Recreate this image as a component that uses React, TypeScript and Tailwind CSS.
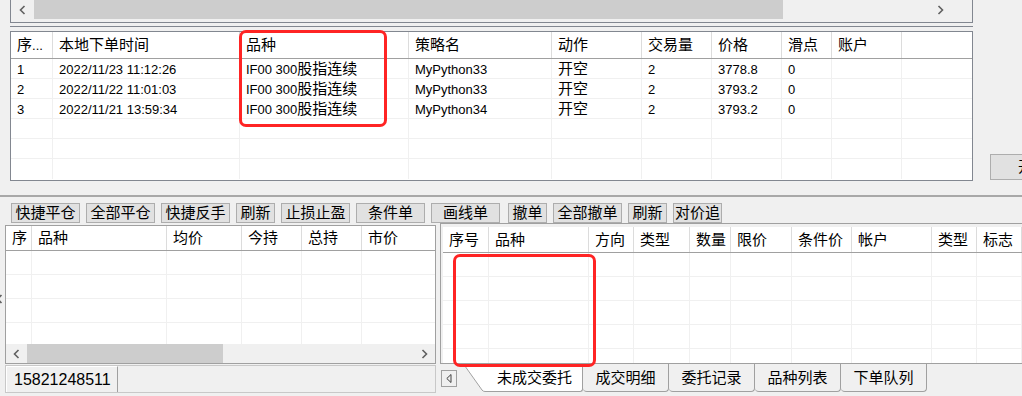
import React from 'react';

const cjk = /[\u2e80-\u9fff\uff00-\uffef]/;

// mixed text: CJK glyphs render larger than the latin ones, as on the Windows UI
const Txt: React.FC<{ s: string }> = ({ s }) => {
  const runs: { t: string; c: boolean }[] = [];
  for (const ch of s) {
    const c = cjk.test(ch);
    const last = runs[runs.length - 1];
    if (last && last.c === c) last.t += ch;
    else runs.push({ t: ch, c });
  }
  return (
    <span className="whitespace-nowrap leading-none">
      {runs.map((r, i) => (
        <span key={i} className={r.c ? 'text-[15px]' : 'text-[13px]'}>
          {r.t}
        </span>
      ))}
    </span>
  );
};

const Chevron: React.FC<{ dir: 'left' | 'right' }> = ({ dir }) => (
  <svg width="7" height="10" viewBox="0 0 7 10">
    <path
      d={dir === 'left' ? 'M5.5 1 L1.5 5 L5.5 9' : 'M1.5 1 L5.5 5 L1.5 9'}
      fill="none"
      stroke="#606060"
      strokeWidth="1.6"
    />
  </svg>
);

const topCols = ['w-[42px]', 'w-[187px]', 'w-[169px]', 'w-[143px]', 'w-[90px]', 'w-[70px]', 'w-[70px]', 'w-[50px]', 'w-[70px]'];
const topHead = ['序...', '本地下单时间', '品种', '策略名', '动作', '交易量', '价格', '滑点', '账户'];
const topRows = [
  ['1', '2022/11/23 11:12:26', 'IF00 300股指连续', 'MyPython33', '开空', '2', '3778.8', '0', ''],
  ['2', '2022/11/22 11:01:03', 'IF00 300股指连续', 'MyPython33', '开空', '2', '3793.2', '0', ''],
  ['3', '2022/11/21 13:59:34', 'IF00 300股指连续', 'MyPython34', '开空', '2', '3793.2', '0', ''],
  ['', '', '', '', '', '', '', '', ''],
  ['', '', '', '', '', '', '', '', ''],
  ['', '', '', '', '', '', '', '', ''],
];

const posCols = ['w-[26px]', 'w-[135px]', 'w-[75px]', 'w-[60px]', 'w-[60px]'];
const posHead = ['序', '品种', '均价', '今持', '总持', '市价'];

const ordCols = ['w-[46px]', 'w-[100px]', 'w-[45px]', 'w-[56px]', 'w-[41px]', 'w-[61px]', 'w-[60px]', 'w-[80px]', 'w-[45px]', 'w-[45px]'];
const ordHead = ['序号', '品种', '方向', '类型', '数量', '限价', '条件价', '帐户', '类型', '标志'];

const toolButtons = [
  { label: '快捷平仓', w: 'w-[69px]' },
  { label: '全部平仓', w: 'w-[69px]' },
  { label: '快捷反手', w: 'w-[69px]' },
  { label: '刷新', w: 'w-[39px]' },
  { label: '止损止盈', w: 'w-[69px]' },
  { label: '条件单', w: 'w-[69px]' },
  { label: '画线单', w: 'w-[69px]' },
  { label: '撤单', w: 'w-[39px] ml-[2px]' },
  { label: '全部撤单', w: 'w-[69px]' },
  { label: '刷新', w: 'w-[39px]' },
  { label: '对价追', w: 'w-[49px]' },
];

const tabs = ['成交明细', '委托记录', '品种列表', '下单队列'];

export default function App() {
  return (
    <div className="relative w-[1022px] h-[396px] overflow-hidden bg-[#f0f0f0] text-black font-['Liberation_Sans','Noto_Sans_CJK_SC',sans-serif] flex flex-col">
      {/* upper area: signal log */}
      <div className="h-[195px] flex shrink-0">
        <div className="w-[10px] shrink-0" />
        <div className="w-[963px] shrink-0 flex flex-col">
          <div className="h-[23px] border-x border-b border-[#828790] bg-[#f0f0f0] flex flex-col">
            <div className="h-[19px] flex">
              <div className="w-[23px] flex items-center justify-center">
                <Chevron dir="left" />
              </div>
              <div className="w-[749px] bg-[#cdcdcd]" />
              <div className="flex-1" />
              <div className="w-[21px] flex items-center justify-center">
                <Chevron dir="right" />
              </div>
              <div className="w-[21px]" />
            </div>
          </div>
          <div className="h-[3px]" />
          <div className="h-[1px] bg-[#828790]" />
          <div className="h-[4px]" />
          <div className="h-[150px] border border-[#828790] bg-white flex flex-col">
            <div className="h-[27px] flex border-b border-[#a0a0a0] shrink-0">
              {topHead.map((h, i) => (
                <div key={i} className={`${topCols[i]} shrink-0 border-r border-[#dcdcdc] pl-[6px] flex items-center`}>
                  <Txt s={h} />
                </div>
              ))}
              <div className="flex-1" />
            </div>
            {topRows.map((r, ri) => (
              <div key={ri} className="h-[20px] flex border-b border-[#f0f0f0] last:border-b-0 shrink-0">
                {r.map((c, ci) => (
                  <div key={ci} className={`${topCols[ci]} shrink-0 border-r border-[#f0f0f0] pl-[6px] flex items-center`}>
                    <Txt s={c} />
                  </div>
                ))}
                <div className="flex-1" />
              </div>
            ))}
          </div>
        </div>
        <div className="flex-1 min-w-0">
          <div className="ml-[17px] mt-[154px] w-[86px] h-[26px] border border-[#adadad] bg-[#e1e1e1] flex items-center pl-[27px]">
            <Txt s="开仓" />
          </div>
        </div>
      </div>

      <div className="h-[2px] bg-[#a8a8a8] shrink-0" />

      {/* toolbar */}
      <div className="pt-[6px] pl-[11px] flex gap-[6px] shrink-0">
        {toolButtons.map((b, i) => (
          <div key={i} className={`${b.w} h-[20px] shrink-0 border border-[#adadad] bg-[#e1e1e1] flex items-center justify-center`}>
            <Txt s={b.label} />
          </div>
        ))}
      </div>

      {/* lower area */}
      <div className="flex flex-1">
        <div className="w-[5px] shrink-0 pt-[71px] overflow-hidden">
          <div className="-ml-[4px]">
            <Chevron dir="left" />
          </div>
        </div>

        {/* positions */}
        <div className="w-[431px] shrink-0 flex flex-col">
          <div className="mt-[2px] h-[139px] border border-[#a0a0a0] bg-white flex flex-col">
            <div className="h-[25px] flex border-b border-[#a0a0a0] shrink-0">
              {posHead.map((h, i) => (
                <div key={i} className={`${posCols[i] ?? 'flex-1'} shrink-0 ${i < 5 ? 'border-r border-[#dcdcdc]' : ''} pl-[6px] flex items-center`}>
                  <Txt s={h} />
                </div>
              ))}
            </div>
            <div className="flex-1 overflow-hidden">
              {[0, 1, 2, 3].map((ri) => (
                <div key={ri} className="h-[24px] flex border-b border-[#f0f0f0]">
                  {posCols.map((w, ci) => (
                    <div key={ci} className={`${w} shrink-0 border-r border-[#f0f0f0]`} />
                  ))}
                  <div className="flex-1" />
                </div>
              ))}
            </div>
            <div className="h-[19px] flex bg-[#f0f0f0] shrink-0">
              <div className="w-[21px] flex items-center justify-center">
                <Chevron dir="left" />
              </div>
              <div className="w-[196px] bg-[#cdcdcd]" />
              <div className="flex-1" />
              <div className="w-[21px] flex items-center justify-center">
                <Chevron dir="right" />
              </div>
            </div>
          </div>
          <div className="mt-[1px] h-[28px] border border-[#c8c8c8] flex">
            <div className="w-[112px] border-r border-[#a0a0a0] border-l border-t border-l-white border-t-white flex items-center pl-[7px]">
              <span className="text-[16px] leading-none">15821248511</span>
            </div>
            <div className="flex-1" />
          </div>
        </div>

        <div className="w-[4px] shrink-0" />

        {/* working orders */}
        <div className="w-[590px] shrink-0 flex flex-col">
          <div className="h-[141px] border border-[#a0a0a0] bg-[#f0f0f0] pl-[2px] pt-[3px] flex flex-col">
            <div className="flex-1 bg-white flex flex-col overflow-hidden">
              <div className="h-[26px] flex border-b border-[#a0a0a0] shrink-0">
                {ordHead.map((h, i) => (
                  <div key={i} className={`${ordCols[i]} shrink-0 border-r border-[#dcdcdc] pl-[6px] flex items-center`}>
                    <Txt s={h} />
                  </div>
                ))}
                <div className="flex-1" />
              </div>
              {[0, 1, 2, 3, 4].map((ri) => (
                <div key={ri} className="h-[24px] flex border-b border-[#f0f0f0] shrink-0">
                  {ordCols.map((w, ci) => (
                    <div key={ci} className={`${w} shrink-0 border-r border-[#f0f0f0]`} />
                  ))}
                  <div className="flex-1" />
                </div>
              ))}
            </div>
          </div>

          {/* sheet tabs */}
          <div className="h-[28px] flex items-start">
            <div className="ml-[1px] mt-[6px] w-[16px] h-[17px] border border-[#a0a0a0] bg-[#f0f0f0] flex items-center justify-center">
              <svg width="6" height="9" viewBox="0 0 6 9">
                <path d="M5 0.5 L0.8 4.5 L5 8.5 Z" fill="none" stroke="#404040" strokeWidth="1" />
              </svg>
            </div>
            <div className="ml-[6px] flex h-[28px]">
              <svg width="22" height="28" viewBox="0 0 22 28" className="shrink-0">
                <polygon points="0,0 22,0 22,27.5 20,27.5" fill="#ffffff" />
                <path d="M0.5 0 L19 26 Q20 27.5 22 27.5" fill="none" stroke="#a0a0a0" strokeWidth="1" />
              </svg>
              <div className="w-[98px] h-[28px] bg-white border-b border-r border-[#a0a0a0] rounded-br-[3px] flex items-center pl-[12px]">
                <Txt s="未成交委托" />
              </div>
            </div>
            {tabs.map((t) => (
              <div key={t} className="w-[86px] h-[28px] shrink-0 border-b border-r border-[#a0a0a0] rounded-b-[4px] flex items-center justify-center">
                <Txt s={t} />
              </div>
            ))}
          </div>
        </div>
      </div>

      {/* red annotation marks */}
      <div className="absolute left-[239px] top-[30px] w-[148px] h-[97px] border-[3px] border-[#ff2424] rounded-[7px]" />
      <div className="absolute left-[453px] top-[254px] w-[143px] h-[113px] border-[3px] border-[#ff2424] rounded-[7px]" />
    </div>
  );
}
